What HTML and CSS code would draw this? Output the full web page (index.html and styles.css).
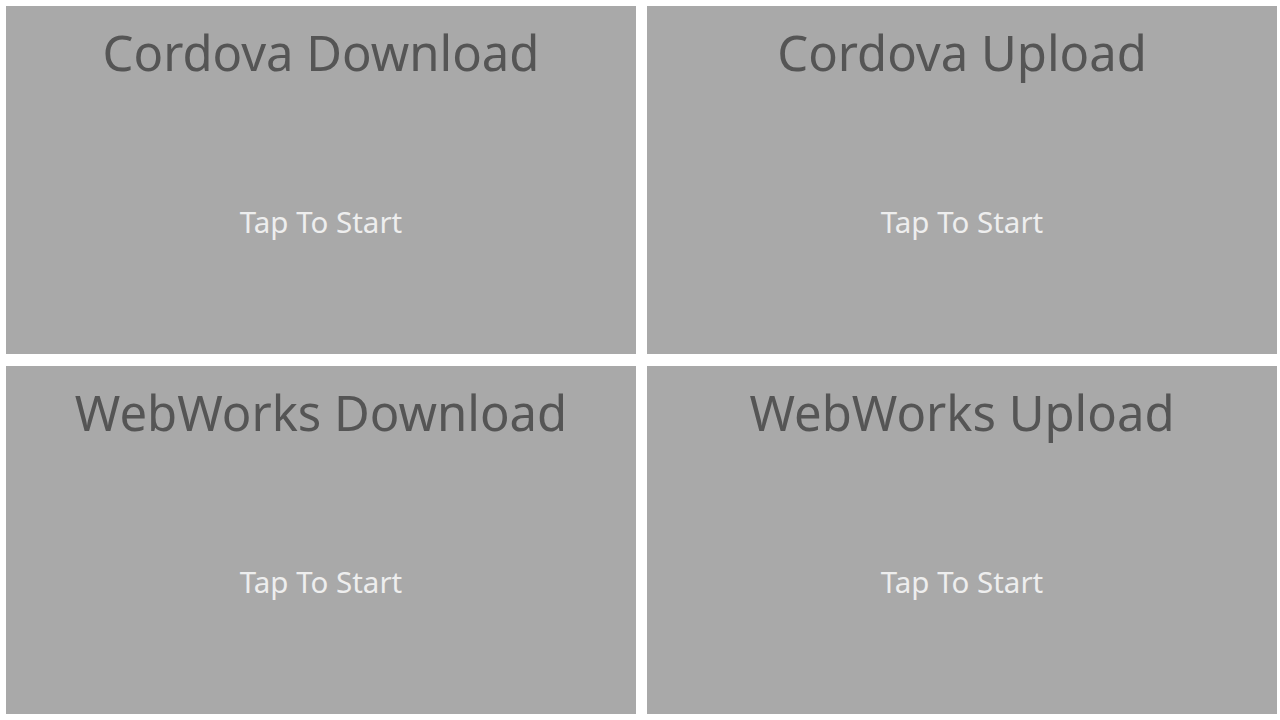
FILE: index.html
```html
<!DOCTYPE html>
<html>
<head>
<meta charset="utf-8">
<link rel="stylesheet" href="styles.css">
</head>
<body>
<div class="grid">
  <div class="tile"><div class="title">Cordova Download</div><div class="tap">Tap To Start</div></div>
  <div class="tile"><div class="title">Cordova Upload</div><div class="tap">Tap To Start</div></div>
  <div class="tile"><div class="title">WebWorks Download</div><div class="tap">Tap To Start</div></div>
  <div class="tile"><div class="title">WebWorks Upload</div><div class="tap">Tap To Start</div></div>
</div>
</body>
</html>
```
FILE: styles.css
```css
html, body {
  margin: 0;
  padding: 0;
  background: #ffffff;
  width: 1280px;
  height: 720px;
  overflow: hidden;
}
.grid {
  display: grid;
  grid-template-columns: 630px 630px;
  grid-template-rows: 348px 348px;
  column-gap: 11px;
  row-gap: 12px;
  padding: 6px 3px 6px 6px;
}
.tile {
  background: #a9a9a9;
  display: flex;
  flex-direction: column;
  align-items: center;
  font-family: "Noto Sans", "Open Sans", sans-serif;
}
.title {
  color: #555555;
  font-size: 49px;
  line-height: 1;
  margin-top: 22px;
}
.tap {
  color: #eeeeee;
  font-size: 29.5px;
  line-height: 1;
  margin-top: 130px;
}
```
